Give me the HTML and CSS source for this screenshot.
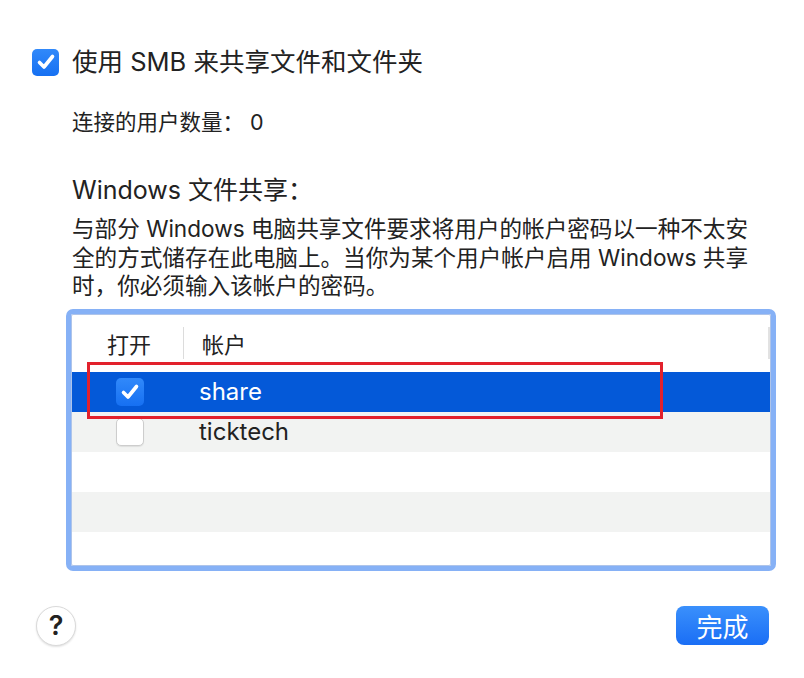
FILE: index.html
```html
<!DOCTYPE html>
<html lang="zh-CN">
<head>
<meta charset="utf-8">
<title>SMB</title>
<link rel="stylesheet" href="styles.css">
</head>
<body>
<div class="sheet">
  <div class="main-option">
    <span class="cb cb-on">
      <svg viewBox="0 0 26 26" width="26" height="26"><path d="M6.5 13.5 L11 18 L19.5 7.5" fill="none" stroke="#fff" stroke-width="3.6" stroke-linecap="round" stroke-linejoin="round"/></svg>
    </span>
    <span class="main-label">使用 SMB 来共享文件和文件夹</span>
  </div>
  <div class="count">连接的用户数量： 0</div>
  <div class="heading">Windows 文件共享：</div>
  <p class="desc">与部分 Windows 电脑共享文件要求将用户的帐户密码以一种不太安全的方式储存在此电脑上。当你为某个用户帐户启用 Windows 共享时，你必须输入该帐户的密码。</p>
  <div class="ring">
    <div class="table">
      <div class="thead">
        <div class="col1 th">打开</div>
        <div class="sep"></div>
        <div class="col2 th">帐户</div>
        <div class="scroll-mark"></div>
      </div>
      <div class="row selected">
        <div class="col1"><span class="cb cb-on small">
          <svg viewBox="0 0 26 26" width="26" height="26"><path d="M6.5 13.5 L11 18 L19.5 7.5" fill="none" stroke="#fff" stroke-width="3.6" stroke-linecap="round" stroke-linejoin="round"/></svg>
        </span></div>
        <div class="col2">share</div>
      </div>
      <div class="row alt">
        <div class="col1"><span class="cb cb-off"></span></div>
        <div class="col2">ticktech</div>
      </div>
      <div class="row"></div>
      <div class="row alt"></div>
      <div class="row"></div>
    </div>
    <div class="highlight"></div>
  </div>
  <div class="footer">
    <div class="help">?</div>
    <div class="done">完成</div>
  </div>
</div>
</body>
</html>
```

FILE: styles.css
```css
html, body {
  margin: 0;
  padding: 0;
  background: #ffffff;
}
body {
  font-family: "Inter", "Noto Sans CJK SC", sans-serif;
  color: #222222;
}
.sheet {
  width: 804px;
  height: 678px;
  box-sizing: border-box;
  padding: 47px 28px 0 32px;
  display: flex;
  flex-direction: column;
}
.main-option {
  display: flex;
  align-items: center;
  height: 30px;
  gap: 13px;
}
.cb {
  display: inline-flex;
  align-items: center;
  justify-content: center;
  box-sizing: border-box;
  width: 27px;
  height: 27px;
  border-radius: 5px;
  flex: none;
}
.cb.small {
  width: 28px;
  height: 28px;
}
.cb-on {
  background: linear-gradient(#3189fa, #1670f2);
}
.cb-off {
  width: 28px;
  height: 28px;
  background: #fff;
  border: 1px solid #cdcdcd;
  box-shadow: 0 1px 1px rgba(0,0,0,0.08);
}
.main-label {
  font-size: 25.5px;
  line-height: 30px;
}
.count {
  margin: 31px 0 0 40px;
  font-size: 21.5px;
  line-height: 28px;
}
.heading {
  margin: 39px 0 0 40px;
  font-size: 25px;
  line-height: 30px;
}
.desc {
  margin: 10px 0 0 40px;
  font-size: 22.6px;
  line-height: 28.5px;
  width: 688px;
}
.ring {
  position: relative;
  margin: 8px 0 0 34px;
  width: 710px;
  height: 262px;
  box-sizing: border-box;
  border: 5px solid #86b1f6;
  border-radius: 7px;
}
.table {
  height: 100%;
  box-sizing: border-box;
  border: 1px solid #aec4ea;
  border-radius: 2px;
  background: #fff;
  overflow: hidden;
}
.thead {
  display: flex;
  align-items: center;
  height: 57px;
  position: relative;
}
.th {
  font-size: 22px;
}
.col1 {
  width: 111px;
  box-sizing: border-box;
  padding-left: 35px;
  display: flex;
  align-items: center;
}
.row .col1 {
  padding-left: 44px;
}
.sep {
  width: 1px;
  height: 32px;
  background: #dcdcdc;
}
.col2 {
  padding-left: 18px;
}
.row .col2 {
  padding-left: 16px;
  font-size: 24px;
  width: 500px;
}
.scroll-mark {
  position: absolute;
  right: 0;
  top: 12px;
  width: 2px;
  height: 32px;
  background: #e2e2e2;
}
.row {
  display: flex;
  align-items: center;
  height: 40px;
}
.row.alt {
  background: #f2f3f2;
}
.row.selected {
  background: #0459d8;
  color: #fff;
}
.highlight {
  position: absolute;
  left: 16px;
  top: 48px;
  width: 576px;
  height: 57px;
  box-sizing: border-box;
  border: 3px solid #e2212c;
}
.footer {
  margin-top: 34px;
  display: flex;
  justify-content: space-between;
  align-items: center;
  padding-left: 4px;
  height: 42px;
}
.help {
  width: 40px;
  height: 40px;
  box-sizing: border-box;
  border-radius: 50%;
  border: 1px solid #dadada;
  box-shadow: 0 1px 2px rgba(0,0,0,0.12);
  display: flex;
  align-items: center;
  justify-content: center;
  font-size: 27px;
  font-weight: 600;
  color: #222;
  background: #fff;
}
.done {
  width: 93px;
  height: 39px;
  border-radius: 8px;
  background: linear-gradient(#3a90fc, #1a6ef5);
  color: #fff;
  font-size: 26px;
  display: flex;
  align-items: center;
  justify-content: center;
  margin-right: 7px;
}
```
